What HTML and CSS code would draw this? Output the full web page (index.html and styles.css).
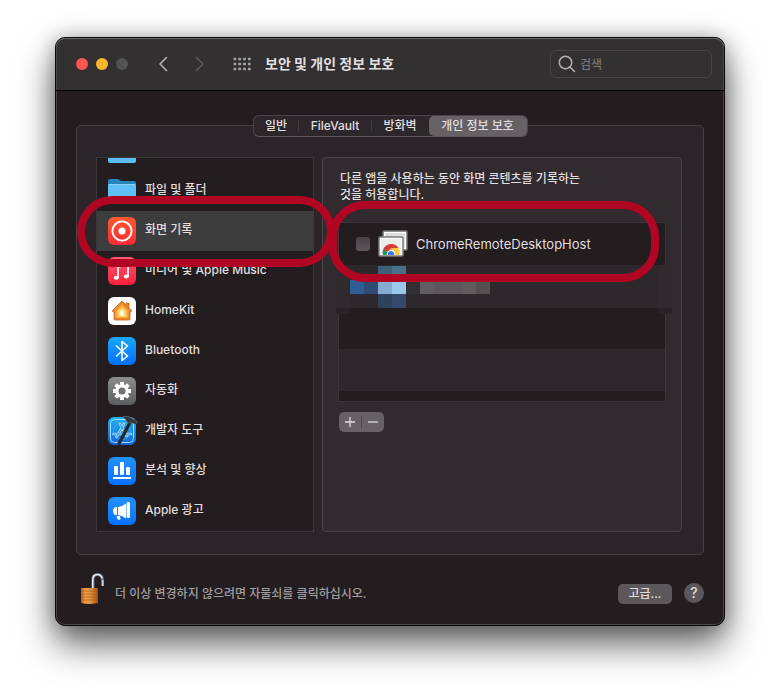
FILE: index.html
```html
<!DOCTYPE html>
<html lang="ko">
<head>
<meta charset="utf-8">
<meta name="viewport" content="width=device-width, initial-scale=1">
<title>보안 및 개인 정보 보호</title>
<link rel="stylesheet" href="styles.css">
</head>
<body>
<main class="window">
  <header class="titlebar">
    <div class="lights">
      <button class="light light-close" aria-label="닫기"></button>
      <button class="light light-min" aria-label="최소화"></button>
      <button class="light" aria-label="확대" disabled></button>
    </div>
    <div class="history">
      <button class="plain" aria-label="뒤로"><svg width="10" height="16" viewBox="0 0 10 16"><path d="M8.500 1.500 2 8l6.500 6.500" fill="none" stroke="#b5b3b4" stroke-width="1.600" stroke-linecap="round" stroke-linejoin="round"/></svg></button>
      <button class="plain" aria-label="앞으로" disabled><svg width="10" height="16" viewBox="0 0 10 16"><path d="M1.500 1.500 8 8l-6.500 6.500" fill="none" stroke="#5c5a5b" stroke-width="1.600" stroke-linecap="round" stroke-linejoin="round"/></svg></button>
    </div>
    <button class="plain" aria-label="모두 보기"><svg width="18" height="14" viewBox="0 0 18 14"><path d="M.5 2H18M.5 7H18M.5 12H18" stroke="#a09e9f" stroke-width="2.600" stroke-dasharray="2.800 2" fill="none"/></svg></button>
    <h1 class="title">보안 및 개인 정보 보호</h1>
    <label class="search">
      <svg width="18" height="18" viewBox="0 0 18 18" fill="none" stroke="#b0aeaf" stroke-width="1.500" stroke-linecap="round"><circle cx="7.500" cy="7.500" r="6.200"/><path d="m12 12 4.500 4.500"/></svg>
      <input type="search" placeholder="검색" aria-label="검색">
    </label>
  </header>

  <div class="content">
    <nav class="tabs" aria-label="설정 구역">
      <button class="tab">일반</button>
      <button class="tab">FileVault</button>
      <button class="tab">방화벽</button>
      <button class="tab tab-active">개인 정보 보호</button>
    </nav>
    <section class="group">
      <div class="sidebar">
        <ul class="services">
          <li><button class="service" aria-label="파일"><svg class="icon" viewBox="0 0 28 28"><rect y="4" width="28" height="22" rx="2" fill="#5dbdf2"/></svg></button></li>
          <li><button class="service"><svg class="icon" viewBox="0 0 28 28"><path d="M0 4q0-2 2-2h7q1.500 0 2.500 1t2.500 1h12q2 0 2 2v8H0z" fill="#2685bd"/><path d="M0 8q0-1 2-1h24q2 0 2 1v16q0 2-2 2H2q-2 0-2-2z" fill="#61c0f5"/><path d="M1 7.500h26" stroke="#8ad2fa"/></svg><span>파일 및 폴더</span></button></li>
          <li><button class="service service-active"><svg class="icon" viewBox="0 0 28 28"><defs><linearGradient id="rec" x2="0" y2="1"><stop stop-color="#ff5a30"/><stop offset="1" stop-color="#fb2b35"/></linearGradient></defs><rect width="28" height="28" rx="6" fill="url(#rec)"/><circle cx="14" cy="14" r="9.600" fill="none" stroke="#fff" stroke-width="1.900"/><circle cx="14" cy="14" r="3.500" fill="#fff"/></svg><span>화면 기록</span></button></li>
          <li><button class="service"><svg class="icon" viewBox="0 0 28 28"><defs><linearGradient id="mus" x2="0" y2="1"><stop stop-color="#fb5a6f"/><stop offset="1" stop-color="#fa203c"/></linearGradient></defs><rect width="28" height="28" rx="6" fill="url(#mus)"/><path d="M10 7.200 20 5v14.500M10 21V7.200M10 10l10-2.300" fill="none" stroke="#fff" stroke-width="1.700"/><ellipse cx="8.300" cy="20.800" rx="2.500" ry="2" fill="#fff"/><ellipse cx="18.300" cy="19.500" rx="2.500" ry="2" fill="#fff"/></svg><span>미디어 및 Apple Music</span></button></li>
          <li><button class="service"><svg class="icon" viewBox="0 0 28 28"><rect width="28" height="28" rx="6" fill="#fff"/><path d="M4 14 14 4l4 4V6h3v5l3 3-2 1v7q0 1-1 1H7q-1 0-1-1v-7z" fill="#f08322" stroke="#c56b24" stroke-width=".8" stroke-linejoin="round"/><path d="m14 7 6.500 6.500V21h-13v-7.500z" fill="#f9a642"/><path d="m14 9.500 4.500 4.500v6h-9v-6z" fill="#fbd061"/><path d="m14 12 2.500 2.500V19h-5v-4.500z" fill="#fff0a6"/><path d="m14 14 1.200 1.300V18h-2.400v-2.700z" fill="#fff"/></svg><span>HomeKit</span></button></li>
          <li><button class="service"><svg class="icon" viewBox="0 0 28 28"><defs><linearGradient id="blue" x2="0" y2="1"><stop stop-color="#18a8fb"/><stop offset="1" stop-color="#066ffc"/></linearGradient></defs><rect width="28" height="28" rx="6" fill="url(#blue)"/><path d="m8.500 9 11 10-5.500 4.500v-19L19.500 9l-11 10" fill="none" stroke="#fff" stroke-width="1.600" stroke-linejoin="round" stroke-linecap="round"/></svg><span>Bluetooth</span></button></li>
          <li><button class="service"><svg class="icon" viewBox="0 0 28 28"><defs><linearGradient id="gray" x2="0" y2="1"><stop stop-color="#8b8c8e"/><stop offset="1" stop-color="#5b5d5f"/></linearGradient></defs><rect width="28" height="28" rx="6" fill="url(#gray)"/><g stroke="#fff" stroke-width="3.800"><path d="M14 5v18M5 14h18M7.600 7.600l12.800 12.800M20.400 7.600 7.600 20.400"/></g><circle cx="14" cy="14" r="6.800" fill="#fff"/><circle cx="14" cy="14" r="3.600" fill="#727375"/></svg><span>자동화</span></button></li>
          <li><button class="service"><svg class="icon icon-dev" viewBox="0 0 28 28"><defs><linearGradient id="dev" x2="0" y2="1"><stop stop-color="#20b3f3"/><stop offset="1" stop-color="#1463d8"/></linearGradient></defs><rect width="28" height="28" rx="6" fill="url(#dev)"/><rect x="2.500" y="2.500" width="23" height="23" rx="4" fill="none" stroke="#a5d8fb"/><circle cx="14" cy="14" r="8.500" fill="none" stroke="#6dbaf0" stroke-width=".5"/><path d="M12 7l6.500 12M16 7 8.500 20M5.500 17h9M18 17h5" fill="none" stroke="#a9e0fc" stroke-width="2.600" stroke-linecap="round"/><path d="M12 7l6.500 12M16 7 8.500 20M5.500 17h9M18 17h5" fill="none" stroke="#2695df" stroke-width="1" stroke-linecap="round"/><path d="m22.500 4.500-12 23" stroke="#25272b" stroke-width="3.200"/><path d="M15-.5q6-1.500 10 2.500l4.500 2.500-1.500 3-5-2-2 .5-2-1Q18 1.500 15 .5z" fill="#343539" stroke="#77858c" stroke-width=".5"/></svg><span>개발자 도구</span></button></li>
          <li><button class="service"><svg class="icon" viewBox="0 0 28 28"><defs><linearGradient id="ads" x2="0" y2="1"><stop stop-color="#2292fc"/><stop offset="1" stop-color="#0870fd"/></linearGradient></defs><rect width="28" height="28" rx="6" fill="url(#ads)"/><path d="M5 20h18v2H5z" fill="#fff"/><rect x="6" y="9" width="4" height="9" rx="1" fill="#fff"/><rect x="12" y="5" width="4" height="13" rx="1" fill="#fff"/><rect x="18" y="10" width="4" height="8" rx="1" fill="#fff"/></svg><span>분석 및 향상</span></button></li>
          <li><button class="service"><svg class="icon" viewBox="0 0 28 28"><rect width="28" height="28" rx="6" fill="url(#ads)"/><path d="M9 10v8H7.500Q5 17 5 14t2.500-4zm1 0q4.500-.5 8-3.500v15Q14.500 18.500 10 18zM8.500 19h3.500l.5 3.500q-2.500 1-3.500-1z" fill="#fff"/><rect x="18.500" y="5" width="3.500" height="16" rx="1.500" fill="#fff"/></svg><span>Apple 광고</span></button></li>
        </ul>
        <div class="ring ring-sidebar"></div>
      </div>

      <div class="detail">
        <p class="hint">다른 앱을 사용하는 동안 화면 콘텐츠를 기록하는<br>것을 허용합니다.</p>
        <div class="apps">
          <label class="app">
            <input class="check" type="checkbox">
            <svg width="30" height="28" viewBox="0 0 30 28"><rect x="5" y="1" width="24" height="19" rx="1" fill="#dedede" stroke="#737373" stroke-width="1.500"/><rect x="6.500" y="2.500" width="21" height="16" fill="none" stroke="#fff"/><rect x="1" y="7" width="24" height="19" rx="1" fill="#ececec" stroke="#7d7d7d" stroke-width="1.500"/><rect x="2.500" y="8.500" width="21" height="16" fill="none" stroke="#fff"/><path d="M5 25a8 8 0 0 1 2-8l3 8z" fill="#249b51"/><path d="M5.500 19a8.500 8.500 0 0 1 15-1H13l-2 5z" fill="#d83d34"/><path d="M13 18h7.500q1.500 3 .5 7h-8z" fill="#fbc83b"/><path d="M8.800 25a4.300 4.300 0 1 1 8.400 0z" fill="#fff"/><path d="M9.800 25a3.300 3.300 0 1 1 6.400 0z" fill="#3f7de8"/></svg>
            <span class="app-name">ChromeRemoteDesktopHost</span>
          </label>
          <svg class="mosaic" width="336" height="48" viewBox="0 0 336 48" shape-rendering="crispEdges" aria-hidden="true">
            <path fill="#2d282c" d="M0 0h336v42H0z"/><path fill="#282327" d="M0 42h14v6H0zM322 42h14v6h-14z"/>
            <path fill="#30292e" d="M0 0h14v42H0zM322 0h14v42h-14z"/>
            <path fill="#3f6177" d="M42 0h14v14H42z"/><path fill="#49708a" d="M56 0h14v14H56z"/>
            <path fill="#2f5d94" d="M14 14h14v14H14z"/><path fill="#2d4b73" d="M28 14h14v14H28z"/>
            <path fill="#86abd3" d="M42 14h14v14H42z"/><path fill="#9bc7ed" d="M56 14h14v14H56z"/>
            <path fill="#332e32" d="M70 14h14v14H70z"/><path fill="#625d60" d="M84 14h14v14H84z"/>
            <path fill="#5b575a" d="M98 14h28v14H98z"/><path fill="#605c5e" d="M126 14h14v14h-14z"/><path fill="#545052" d="M140 14h14v14h-14z"/>
            <path fill="#2e425e" d="M42 28h14v14H42z"/><path fill="#33486a" d="M56 28h14v14H56z"/>
          </svg>
          <div class="ring ring-app"></div>
        </div>
        <div class="stepper">
          <button class="step" aria-label="추가"><svg width="10" height="10" viewBox="0 0 10 10"><path d="M5 0v10M0 5h10" stroke="#dedcdd" stroke-width="1.300"/></svg></button>
          <button class="step" aria-label="제거"><svg width="10" height="10" viewBox="0 0 10 10"><path d="M0 5h10" stroke="#dedcdd" stroke-width="1.300"/></svg></button>
        </div>
      </div>
    </section>

    <footer class="footer">
      <button class="plain lock" aria-label="자물쇠"><svg width="26" height="32" viewBox="0 0 26 32"><defs><linearGradient id="brass"><stop stop-color="#b75d17"/><stop offset=".25" stop-color="#eea047"/><stop offset=".55" stop-color="#e3923b"/><stop offset="1" stop-color="#a65212"/></linearGradient></defs><path d="M13 15V7q0-5.500 4.500-5.500T22.500 7v6" fill="none" stroke="#63717a" stroke-width="3"/><path d="M12.700 15V7q0-5.500 4.800-5.500 3.700 0 4.700 4" fill="none" stroke="#e5edf0" stroke-width="1.500"/><path d="M22.800 7v6" stroke="#e5edf0" stroke-width="1.200"/><path d="M1 15h17v15q-9 2-17 0z" fill="url(#brass)"/><path d="M1 18h17M1 21h17M1 24h17M1 27h17" stroke="#8a450f" stroke-opacity=".45"/></svg></button>
      <p class="note">더 이상 변경하지 않으려면 자물쇠를 클릭하십시오.</p>
      <button class="advanced">고급...</button>
      <button class="help" aria-label="도움말">?</button>
    </footer>
  </div>
</main>
</body>
</html>
```
FILE: styles.css
```css
* { box-sizing: border-box; }

body {
  margin: 0;
  padding: 37px 55px 73px;
  background: #fff;
  color: #e0dedf;
  font: 500 12px/16px Inter, "Noto Sans CJK KR", sans-serif;
}

button, input { font: inherit; color: inherit; }
button { display: flex; align-items: center; justify-content: center; padding: 0; border: 0; }
svg { display: block; flex: none; }
p, h1, ul { margin: 0; padding: 0; }
.plain { background: none; }

.window {
  border: 1px solid #080808;
  border-radius: 10px;
  background: #231d20;
  box-shadow: inset 0 0 0 1px #4b484a, 0 18px 36px rgba(0, 0, 0, .62), 0 0 20px rgba(0, 0, 0, .25);
}

.titlebar {
  display: flex;
  align-items: center;
  height: 53px;
  padding: 0 12px 0 20px;
  border-bottom: 1px solid #000;
  border-radius: 9px 9px 0 0;
  background: #323031;
  box-shadow: inset 0 1px #686667, inset 1px 0 #4b494a, inset -1px 0 #4b494a;
}
.lights { display: flex; gap: 8px; }
.light { width: 12px; height: 12px; border-radius: 50%; background: #535152; }
.light-close { background: #ff5550; }
.light-min { background: #ffb333; }
.history { display: flex; gap: 27px; margin: 0 28px 0 30px; }
.title { margin-left: 14px; font-size: 14px; font-weight: 700; line-height: 20px; }
.search {
  display: flex;
  align-items: center;
  gap: 4px;
  width: 162px;
  height: 28px;
  margin-left: auto;
  padding: 0 7px;
  border: 1px solid #464445;
  border-radius: 6px;
}
.search input { width: 100%; min-width: 0; padding: 2px 0 0; border: 0; outline: 0; background: none; }
.search input::placeholder { color: #777576; opacity: 1; }

.content { padding: 24px 20px 20px; }

.tabs {
  position: relative;
  z-index: 1;
  display: grid;
  grid-template-columns: 45px 73px 57px 98px;
  width: max-content;
  height: 22px;
  margin: 0 auto;
  border: 1px solid #49444a;
  border-bottom-color: #5d585c;
  border-radius: 6px;
  background: #2d272b;
}
.tab { background: none; white-space: nowrap; }
.tab:nth-child(-n+2) {
  background: linear-gradient(#413b40, #413b40) right center / 1px 12px no-repeat;
}
.tab-active { border-radius: 5px; background: #666165; }

.group {
  display: flex;
  align-items: flex-start;
  gap: 8px;
  margin-top: -12px;
  padding: 31px 21px 22px 19px;
  border: 1px solid #464145;
  border-radius: 5px;
  background: #2b2529;
}

.sidebar { position: relative; flex: 0 0 218px; }
.services {
  display: flex;
  flex-direction: column;
  justify-content: flex-end;
  height: 375px;
  overflow: hidden;
  border: 1px solid #3a383b;
  background: #231d20;
  list-style: none;
}
.service {
  justify-content: flex-start;
  gap: 9px;
  width: 100%;
  height: 40px;
  padding: 0 11px;
  background: none;
}
.service span { padding-bottom: 2px; }
.service-active { background: #3e3d3e; }
.icon { width: 28px; height: 28px; }
.icon-dev { overflow: visible; }

.detail {
  flex: 1;
  min-width: 0;
  min-height: 375px;
  padding: 13px 15px;
  border: 1px solid #494449;
  border-radius: 4px;
  background: #312b2f;
}
.hint { padding-left: 2px; }
.apps {
  position: relative;
  height: 180px;
  margin-top: 19px;
  border: 1px solid #3a373b;
  background: repeating-linear-gradient(#231d20 0 42px, #2d282c 42px 84px);
}
.app { display: flex; align-items: center; gap: 8px; height: 42px; padding-left: 17px; }
.app-name { font-size: 13px; font-weight: 400; }
.check {
  appearance: none;
  width: 14px;
  height: 14px;
  margin: 0;
  border-radius: 3px;
  background: linear-gradient(#484347, #5b565a);
}
.mosaic { position: absolute; top: 43px; left: -3px; }

.stepper {
  display: flex;
  width: max-content;
  height: 20px;
  margin: 10px 0 0 1px;
  border-radius: 5px;
  background: #666165;
}
.step { width: 22px; background: none; }
.step + .step { width: 23px; background: linear-gradient(#4d484c, #4d484c) left center / 1px 12px no-repeat; }

.ring { position: absolute; z-index: 2; border: 8px solid #b00523; border-radius: 36px; pointer-events: none; }
.ring-sidebar { top: 39px; left: -19px; right: -21px; height: 71px; }
.ring-app { top: -22px; left: -10px; right: 6px; height: 81px; }

.footer { display: flex; align-items: center; margin-top: 18px; padding-left: 4px; }
.note { margin: 10px auto 0 9px; color: #a19d9f; }
.advanced { width: 54px; height: 20px; margin-top: 9px; border-radius: 5px; background: #5c575b; }
.help { width: 20px; height: 20px; margin: 8px 0 0 12px; border-radius: 50%; background: #5c575b; font-size: 14px; }
```
